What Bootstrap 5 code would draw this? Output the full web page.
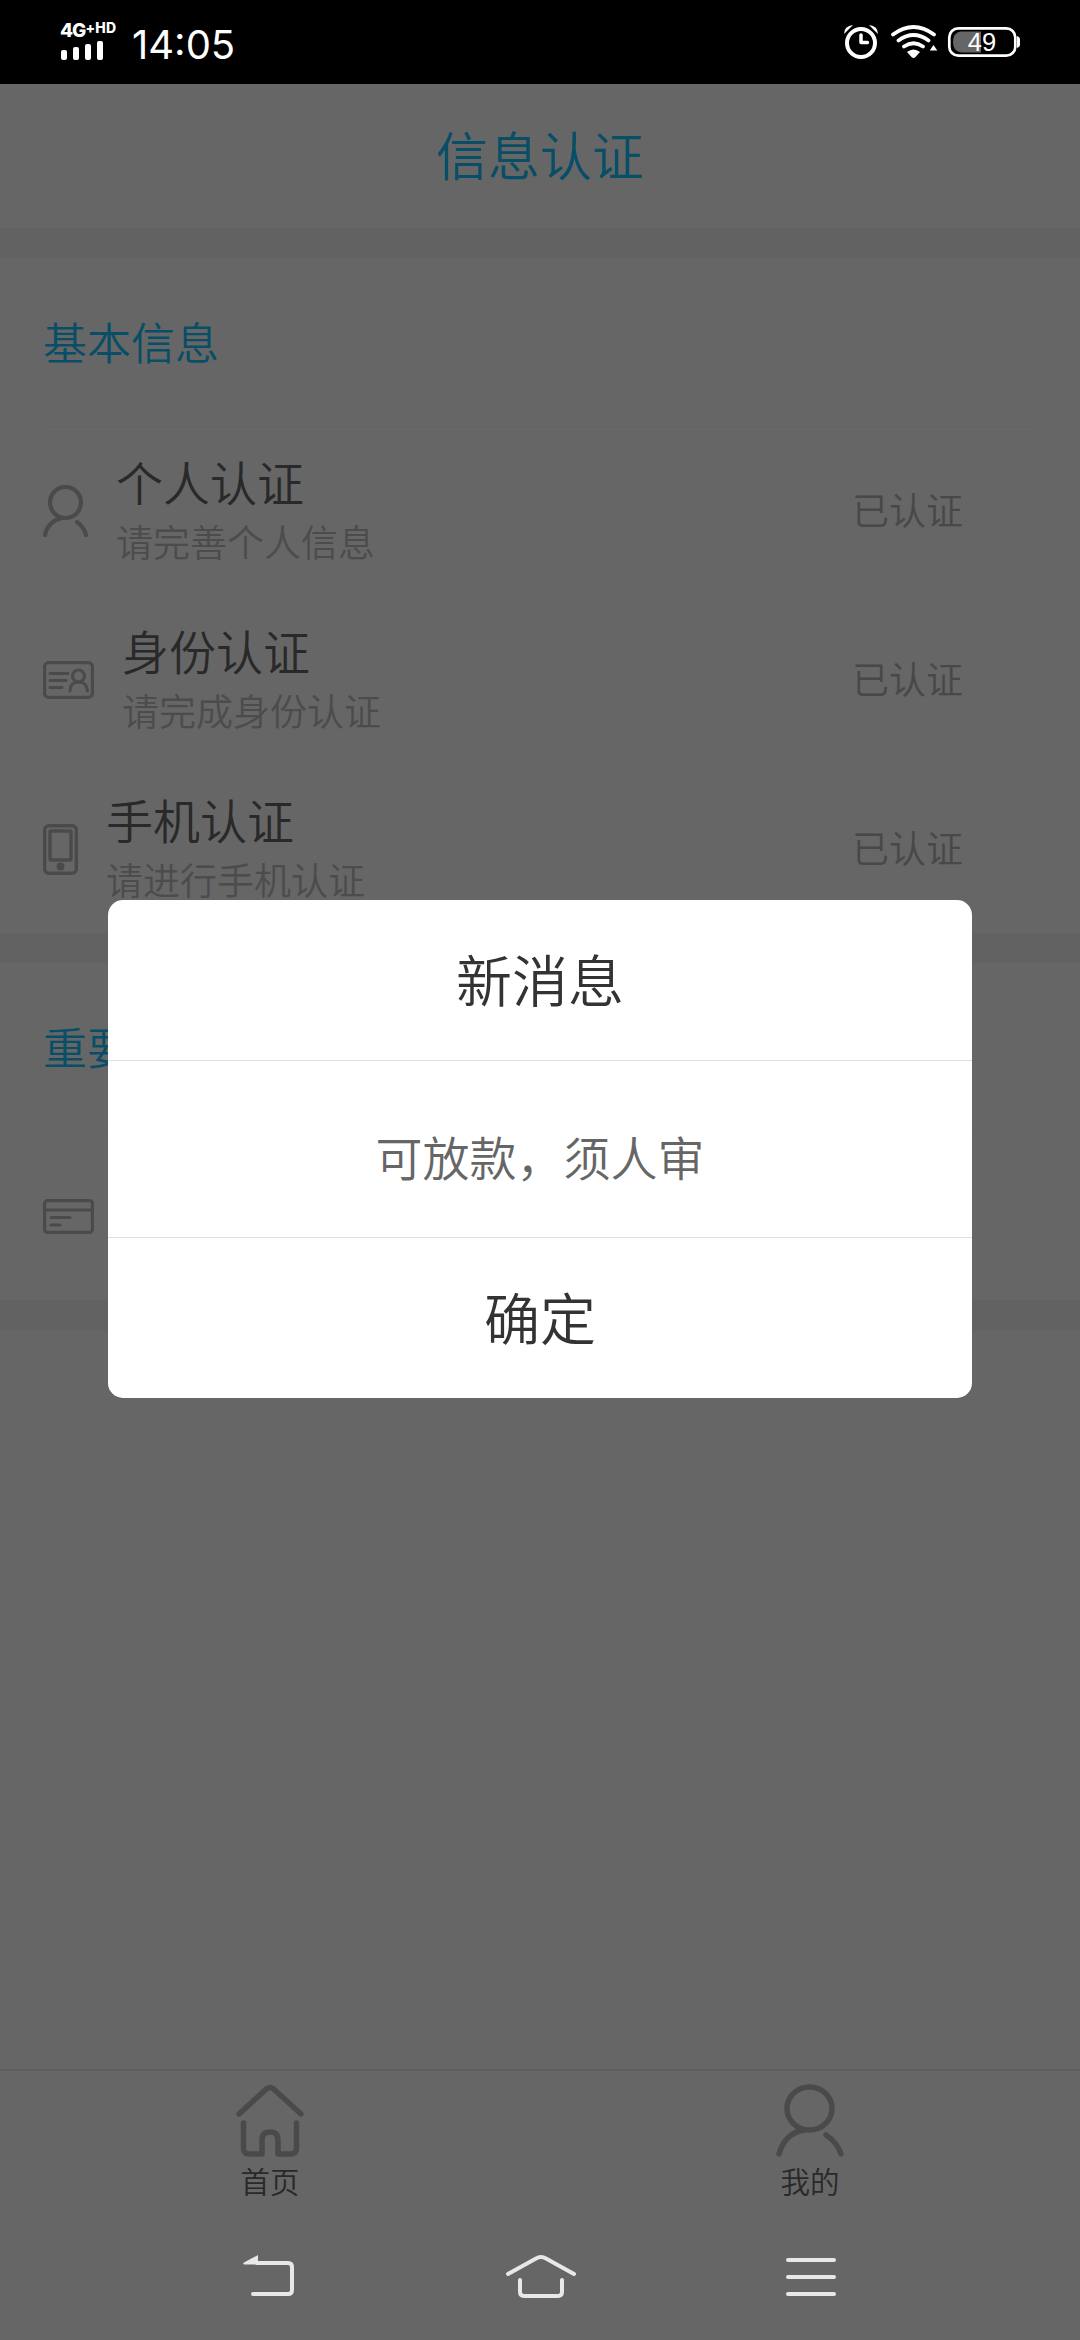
<!DOCTYPE html>
<html lang="zh-CN">
<head>
<meta charset="utf-8">
<meta name="viewport" content="width=device-width, initial-scale=1">
<title>信息认证</title>
<link href="https://cdn.jsdelivr.net/npm/bootstrap@5.3.0/dist/css/bootstrap.min.css" rel="stylesheet">
<style>
body{font-family:"Noto Sans CJK SC",sans-serif;font-weight:350;color:#666;line-height:1;width:1080px;height:2340px;overflow:hidden;background:#fff}
svg{display:block;flex:none;fill:none;stroke-linecap:round;stroke-linejoin:round}
.phone-status{height:84px;background:#000;color:#fff;font-family:Inter,sans-serif;padding:0 58px 0 60px}
.sig-wrap{width:44px}
.sig-label{font-size:19px;font-weight:800;height:16px;line-height:16px;letter-spacing:-1px}
.sig-label sup{font-size:14px;font-weight:800;top:-4px;vertical-align:baseline;line-height:0;letter-spacing:.3px}
.clock{font-size:40px;font-weight:400;line-height:48px;margin-left:28px;margin-top:5px}
.app-screen{height:2130px}
.app-title{height:144px;font-size:52px;font-weight:350;color:#14c3ff;padding-bottom:4px}
.band{height:30px;background:#f6f6f6}
.group-title{height:168px;font-size:44px;color:#14c3ff;padding:0 43px 2px}
.auth-list{padding:0 43px}
.auth-row{height:169px;gap:28px;border-top:1px solid #f8f8f8}
.auth-row svg{stroke:#bababa}
.auth-name{font-size:47px;line-height:60px;color:#666}
.auth-hint{font-size:37px;line-height:60px;color:#bebebe}
.auth-state{font-size:37px;color:#b4b4b4;margin-right:74px;padding-bottom:3px}
.tabs{height:145px;border-top:2px solid #ececec;font-size:29.5px;padding-top:13px}
.tabs svg{stroke:#b8b8b8;stroke-width:5.5}
.tabs a{color:#666;text-decoration:none;gap:9px}
.shade{background:rgba(0,0,0,.6)}
.dialog-box{width:864px;height:498px;border-radius:15px;background:#fff;color:#333;overflow:hidden}
.dialog-head{height:161px;font-size:56px;border-bottom:1px solid #e0e0e0;padding-bottom:4px}
.dialog-msg{height:177px;font-size:47px;color:#666;border-bottom:1px solid #e0e0e0;padding-top:12px}
.dialog-ok{height:160px;font-size:56px;font-weight:350;color:#333;background:none;border:0;padding:0 0 4px}
.sys-nav{height:126px;background:#666}
.sys-nav svg{stroke:#e8e8e8;stroke-width:4}
</style>
<script src="https://cdn.jsdelivr.net/npm/bootstrap@5.3.0/dist/js/bootstrap.bundle.min.js"></script>
</head>
<body class="d-flex flex-column">
<header class="phone-status d-flex align-items-center justify-content-between">
  <div class="d-flex align-items-center">
    <div class="sig-wrap d-flex flex-column">
      <div class="sig-label text-nowrap">4G<sup>+HD</sup></div>
      <svg width="58" height="22" viewBox="0 0 58 22"><g fill="#fff"><rect x="1" y="11" width="6" height="10" rx="2"/><rect x="13" y="8" width="6" height="13" rx="2"/><rect x="25" y="5" width="6" height="16" rx="2"/><rect x="37" y="2" width="6" height="19" rx="2"/></g></svg>
    </div>
    <div class="clock">14:05</div>
  </div>
  <div class="d-flex align-items-center">
    <svg width="36" height="36" viewBox="843 24 36 36" stroke="#fff"><circle cx="860" cy="43" r="14" stroke-width="4"/><path d="M860 35v7.500h6.500" stroke-width="3.500"/><path d="M843 34q0-8 9-9zM877 34q0-8-9-9z" fill="#fff" stroke="none"/></svg>
    <svg class="ms-2 me-2" width="50" height="36" viewBox="887 24 50 36" stroke="#fff"><path d="M892 34.500q20.500-15 41 0M897.500 40.500q15-11 30 0M903 46.500q9.500-6.500 19 0" stroke-width="3.800"/><path d="M906 52q6.500-5 13 0l-4.500 5q-2 2-4 0z" fill="#fff" stroke="none"/><path d="M932.500 45l3.800 5.500h-7.600z" fill="#fff" stroke="none"/></svg>
    <svg width="76" height="32" viewBox="946 26 76 32"><path d="M961 31.500h20v21h-20q-8-1-8-10.500t8-10.500z" fill="#666"/><rect x="949.300" y="28.300" width="66" height="27.400" rx="9" stroke="#fff" stroke-width="2.700"/><path d="M1017 36q3 1 3 3v6q0 2-3 3z" fill="#fff"/><text x="982" y="50.500" text-anchor="middle" fill="#fff" font-family="Liberation Sans" font-size="25.500">49</text></svg>
  </div>
</header>

<main class="app-screen position-relative d-flex flex-column">
  <h1 class="app-title d-flex align-items-center justify-content-center m-0">信息认证</h1>
  <div class="band"></div>
  <section>
    <div class="group-title d-flex align-items-center">基本信息</div>
    <div class="auth-list">
      <div class="auth-row d-flex align-items-center">
        <svg width="45" height="52" viewBox="0 0 45 52" stroke-width="4.200"><circle cx="22.500" cy="17.500" r="15.500"/><path d="M19 33Q5 36 2 50M34 37Q41 42 43 50"/></svg>
        <div class="flex-grow-1"><div class="auth-name">个人认证</div><div class="auth-hint">请完善个人信息</div></div>
        <div class="auth-state">已认证</div>
      </div>
      <div class="auth-row d-flex align-items-center">
        <svg width="51" height="38" viewBox="0 0 51 38" stroke-width="3.200"><rect x="1.600" y="1.600" width="47.800" height="34.800" rx="4"/><path d="M7 12.500h18M7 19.500h16M7 26.500h12"/><circle cx="35.500" cy="15" r="6"/><path d="M27 30q0-9 8.500-9t9 9"/></svg>
        <div class="flex-grow-1"><div class="auth-name">身份认证</div><div class="auth-hint">请完成身份认证</div></div>
        <div class="auth-state">已认证</div>
      </div>
      <div class="auth-row d-flex align-items-center">
        <svg width="35" height="51" viewBox="0 0 35 51" stroke-width="3.400"><rect x="1.700" y="1.700" width="31.600" height="47.600" rx="4"/><rect x="7" y="7" width="21" height="29" rx="1"/><circle cx="17.500" cy="42.500" r="2.300" fill="#bababa"/></svg>
        <div class="flex-grow-1"><div class="auth-name">手机认证</div><div class="auth-hint">请进行手机认证</div></div>
        <div class="auth-state">已认证</div>
      </div>
    </div>
  </section>
  <div class="band"></div>
  <section>
    <div class="group-title d-flex align-items-center">重要信息</div>
    <div class="auth-list">
      <div class="auth-row d-flex align-items-center">
        <svg width="51" height="35" viewBox="0 0 51 35" stroke-width="3.200"><rect x="1.600" y="1.600" width="47.800" height="31.800" rx="3"/><path d="M2 11h47M8 18.500h19M8 26h9"/></svg>
      </div>
    </div>
  </section>
  <div class="band"></div>

  <nav class="tabs d-flex mt-auto">
    <a class="d-flex flex-column align-items-center w-50" href="#"><svg width="68" height="73" viewBox="0 0 68 73"><path d="M3 30L31 4.500q3-2 6 0L65 30M7.500 39v25q0 6 6 6h12.500v-14q0-8 8-8t8 8v14h12.500q6 0 6-6V39"/></svg><span>首页</span></a>
    <a class="d-flex flex-column align-items-center w-50" href="#"><svg width="68" height="73" viewBox="0 0 68 73"><ellipse cx="33.500" cy="24.500" rx="22.500" ry="21.500"/><path d="M28 46Q9 49 3 70M50 51Q61 58 65 70"/></svg><span>我的</span></a>
  </nav>

  <div class="shade position-absolute top-0 start-0 w-100 h-100 d-flex align-items-center justify-content-center">
    <div class="dialog-box d-flex flex-column" role="dialog">
      <div class="dialog-head d-flex align-items-center justify-content-center">新消息</div>
      <div class="dialog-msg d-flex align-items-center justify-content-center">可放款，须人审</div>
      <button class="dialog-ok d-flex align-items-center justify-content-center" type="button">确定</button>
    </div>
  </div>
</main>

<footer class="sys-nav d-flex align-items-center justify-content-center">
  <div class="w-25 d-flex justify-content-center"><svg width="54" height="46" viewBox="243 2254 54 46"><path d="M257 2263h31q4 0 4 4v23q0 4-4 4h-35"/><path d="M244 2262.500L258 2255v9.500h-14q-1.500-1 0-2z" fill="#e8e8e8" stroke="none"/></svg></div>
  <div class="w-25 d-flex justify-content-center"><svg width="72" height="46" viewBox="504 2254 72 46"><path d="M508 2274l28-15.500q5-3 10 0l28 15.500M520 2280v12q0 4 5 4h32q5 0 5-4v-12"/></svg></div>
  <div class="w-25 d-flex justify-content-center"><svg width="54" height="46" viewBox="783 2254 54 46"><path d="M788 2260h46M788 2277h46M788 2294h46"/></svg></div>
</footer>
</body>
</html>
